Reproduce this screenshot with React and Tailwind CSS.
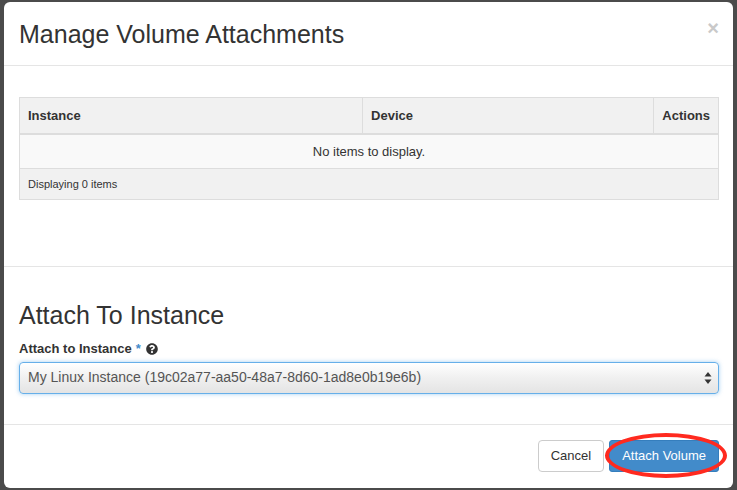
import React from "react";
import { FaQuestionCircle } from "react-icons/fa";

export default function App() {
  const font = { fontFamily: '"Liberation Sans", Arial, Helvetica, sans-serif' };
  return (
    <div className="w-[737px] h-[490px] bg-[#4b4b4b] overflow-hidden pl-[4px] pt-[2px]" style={font}>
      <div className="w-[729px] h-[486px] bg-white rounded-[6px] flex flex-col relative">
        {/* header */}
        <div className="h-[64px] border-b border-[#e5e5e5] flex items-center justify-between pl-[15px] pr-[14px] shrink-0">
          <h4 className="text-[25px] leading-none text-[#333] pt-[2px]">Manage Volume Attachments</h4>
          <span className="text-[20px] font-bold text-[#c9c9c9] leading-none -mt-[12px]">×</span>
        </div>
        {/* table section */}
        <div className="h-[201px] border-b border-[#e5e5e5] px-[15px] pt-[31px] shrink-0">
          <table className="w-[700px] border-collapse border border-[#ddd] text-[13px] text-[#333]">
            <thead>
              <tr className="bg-[#f1f1f1] h-[36px]">
                <th className="w-[344px] text-left font-bold px-[8px] border border-[#ddd] border-b-2">Instance</th>
                <th className="w-[292px] text-left font-bold px-[8px] border border-[#ddd] border-b-2">Device</th>
                <th className="text-left font-bold px-[8px] border border-[#ddd] border-b-2">Actions</th>
              </tr>
            </thead>
            <tbody>
              <tr className="bg-[#f9f9f9] h-[35px]">
                <td colSpan={3} className="text-center border border-[#ddd]">No items to display.</td>
              </tr>
              <tr className="bg-[#f1f1f1] h-[31px]">
                <td colSpan={3} className="text-left px-[8px] text-[11px] border border-[#ddd]">Displaying 0 items</td>
              </tr>
            </tbody>
          </table>
        </div>
        {/* form section */}
        <div className="h-[158px] border-b border-[#e5e5e5] px-[15px] pt-[36px] shrink-0">
          <h3 className="text-[25px] leading-none text-[#333]">Attach To Instance</h3>
          <div className="mt-[11px] flex items-center gap-[4px] text-[13px] font-bold text-[#333]">
            <span>Attach to Instance</span>
            <span className="text-[#428bca]">*</span>
            <FaQuestionCircle className="text-[#333] w-[12px] h-[12px] ml-[1px]" />
          </div>
          <div className="mt-[3px] w-[700px] h-[32px] rounded-[4px] border border-[#66afe9] shadow-[0_0_4px_rgba(102,175,233,0.6)] bg-gradient-to-b from-[#ffffff] via-[#f0f0f0] to-[#e4e4e4] flex items-center justify-between pl-[8px] pr-[6px]">
            <span className="text-[14px] text-[#555]">My Linux Instance (19c02a77-aa50-48a7-8d60-1ad8e0b19e6b)</span>
            <svg width="8" height="14" viewBox="0 0 8 14">
              <path d="M4 1 L7.5 5.5 L0.5 5.5 Z" fill="#333" />
              <path d="M4 13 L7.5 8.5 L0.5 8.5 Z" fill="#333" />
            </svg>
          </div>
        </div>
        {/* footer */}
        <div className="flex justify-end items-start pt-[15px] pr-[14px] gap-[5px]">
          <button className="h-[32px] px-[12px] rounded-[4px] border border-[#ccc] bg-white text-[13px] text-[#333]">Cancel</button>
          <div className="relative">
            <button className="h-[32px] px-[12px] rounded-[3px] bg-[#428bca] border border-[#357ebd] text-[13px] text-white">Attach Volume</button>
            <div className="absolute -left-[4px] -top-[7px] w-[122px] h-[45px] rounded-[50%] border-4 border-[#ff2a1f]" />
          </div>
        </div>
      </div>
    </div>
  );
}
